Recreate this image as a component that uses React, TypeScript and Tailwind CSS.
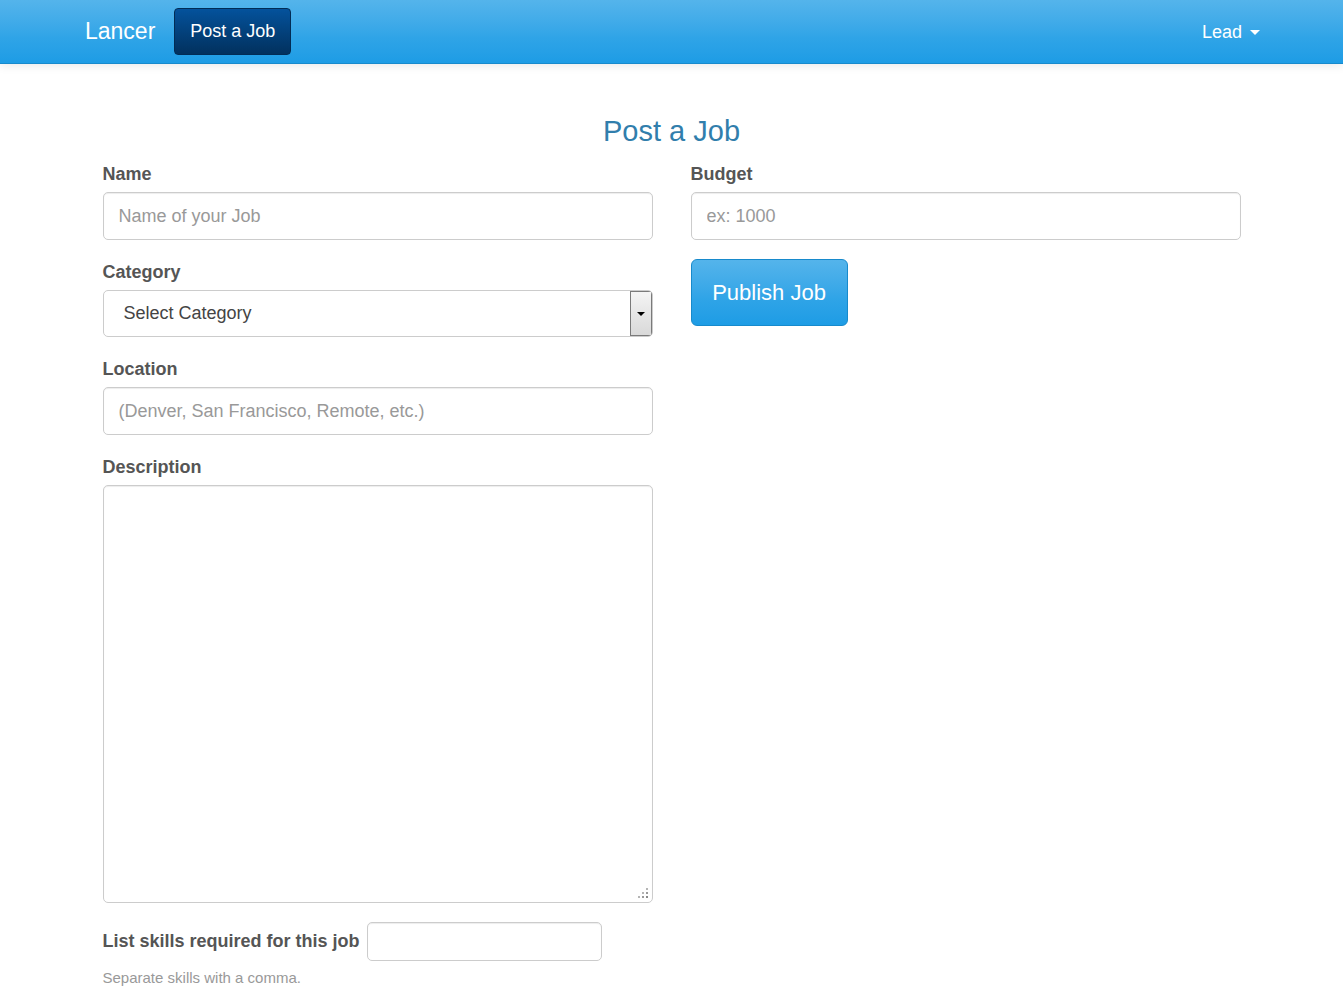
import React from 'react';

const font = { fontFamily: '"Liberation Sans", Arial, sans-serif' };

const inputClass =
  'block h-[48px] w-full rounded-[5px] border border-[#cccccc] bg-white px-[15px] text-[18px] text-[#555555] placeholder:text-[#999999] shadow-[inset_0_1px_1px_rgba(0,0,0,0.075)] outline-none';

const labelClass = 'block h-[20px] leading-[20px] text-[18px] font-bold text-[#555555] mb-[8px]';

const Navbar: React.FC = () => (
  <header className="relative z-10 h-[64px] w-full border-b border-[#178acc] bg-linear-to-b from-[#54b4eb] via-[#2fa4e7] via-60% to-[#1d9ce5] shadow-[0_1px_10px_rgba(0,0,0,0.1)]">
    <div className="flex h-full items-center justify-between pl-[85px] pr-[83px]">
      {/* Brand + action */}
      <div className="flex items-center gap-[19px]">
        <span className="text-[23px] leading-none text-white">Lancer</span>
        <button className="h-[47px] rounded-[4px] border border-[#022c55] bg-linear-to-b from-[#04529c] to-[#02315e] px-[15px] text-[18px] text-white">
          Post a Job
        </button>
      </div>

      {/* User menu */}
      <div className="flex items-center gap-[8px] pt-[1px] text-white">
        <span className="text-[18px] leading-none">Lead</span>
        <span className="h-0 w-0 border-x-[5px] border-t-[5px] border-x-transparent border-t-white"></span>
      </div>
    </div>
  </header>
);

const Field: React.FC<{ label: string; children: React.ReactNode; className?: string }> = ({
  label,
  children,
  className,
}) => (
  <div className={className}>
    <label className={labelClass}>{label}</label>
    {children}
  </div>
);

const ResizeGrip: React.FC = () => (
  <svg className="pointer-events-none absolute bottom-[4px] right-[4px]" width="11" height="11" viewBox="0 0 11 11">
    <rect x="8" y="0" width="2" height="2" fill="#b5b5b5" />
    <rect x="4" y="4" width="2" height="2" fill="#b5b5b5" />
    <rect x="8" y="4" width="2" height="2" fill="#9a9a9a" />
    <rect x="0" y="8" width="2" height="2" fill="#b5b5b5" />
    <rect x="4" y="8" width="2" height="2" fill="#9a9a9a" />
    <rect x="8" y="8" width="2" height="2" fill="#8a8a8a" />
  </svg>
);

const App: React.FC = () => {
  return (
    <div className="min-h-screen bg-white" style={font}>
      <Navbar />

      <main className="mx-auto w-[1138px] pt-[51px] pb-[20px]">
        <h1 className="text-center text-[29px] font-normal leading-[32px] text-[#317eac]">Post a Job</h1>

        <div className="mt-[17px] grid grid-cols-[550px_550px] gap-x-[38px]">
          {/* Left column */}
          <div className="flex flex-col">
            <Field label="Name">
              <input className={inputClass} placeholder="Name of your Job" />
            </Field>

            <Field label="Category" className="mt-[22px]">
              <div className="flex h-[47px] w-full overflow-hidden rounded-[5px] border border-[#cccccc] bg-white">
                <span className="flex flex-1 items-center pl-[20px] text-[18px] text-[#444444]">Select Category</span>
                <span className="flex w-[22px] items-center justify-center border border-[#7a7a7a] bg-linear-to-b from-[#f4f4f4] to-[#d9d9d9]">
                  <span className="h-0 w-0 border-x-[4px] border-t-[4px] border-x-transparent border-t-black"></span>
                </span>
              </div>
            </Field>

            <Field label="Location" className="mt-[22px]">
              <input className={inputClass} placeholder="(Denver, San Francisco, Remote, etc.)" />
            </Field>

            <Field label="Description" className="mt-[22px]">
              <div className="relative">
                <textarea className="block h-[418px] w-full resize-none rounded-[5px] border border-[#cccccc] bg-white px-[15px] py-[10px] text-[18px] text-[#555555] shadow-[inset_0_1px_1px_rgba(0,0,0,0.075)] outline-none" />
                <ResizeGrip />
              </div>
            </Field>

            <div className="mt-[19px] flex items-center gap-[7px]">
              <label className="text-[18px] font-bold text-[#555555]">List skills required for this job</label>
              <input className="h-[39px] w-[235px] rounded-[5px] border border-[#cccccc] bg-white px-[12px] text-[15px] text-[#555555] shadow-[inset_0_1px_1px_rgba(0,0,0,0.075)] outline-none" />
            </div>
            <p className="mt-[8px] text-[15px] leading-[17px] text-[#999999]">Separate skills with a comma.</p>
          </div>

          {/* Right column */}
          <div className="flex flex-col items-start">
            <Field label="Budget" className="w-full">
              <input className={inputClass} placeholder="ex: 1000" />
            </Field>

            <button className="mt-[19px] h-[67px] w-[157px] rounded-[6px] border border-[#178acc] bg-linear-to-b from-[#54b4eb] via-[#2fa4e7] via-60% to-[#1d9ce5] text-[22px] text-white">
              Publish Job
            </button>
          </div>
        </div>
      </main>
    </div>
  );
};

export default App;
